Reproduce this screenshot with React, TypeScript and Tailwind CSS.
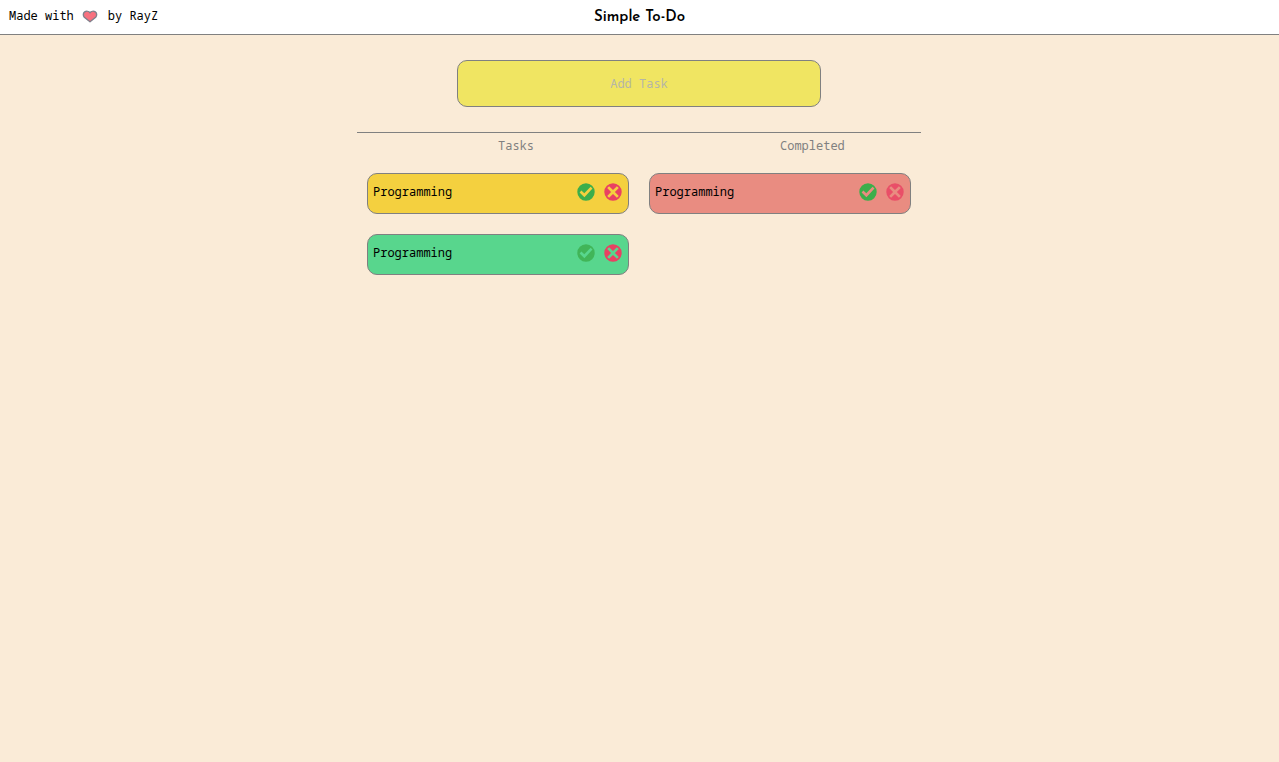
type Task = { id: number; name: string; color: string; canComplete: boolean; canRemove: boolean };

const tasks: Task[] = [
  { id: 1, name: 'Programming', color: 'bg-[#f4d03f]', canComplete: true, canRemove: true },
  { id: 2, name: 'Programming', color: 'bg-[#58d68d]', canComplete: false, canRemove: true },
];

const completed: Task[] = [
  { id: 3, name: 'Programming', color: 'bg-[#e98c81]', canComplete: true, canRemove: false },
];

function Heart() {
  return (
    <svg viewBox="0 0 16 14" className="h-3.5 w-4" aria-hidden="true">
      <path
        d="M8 12.800 2.300 8.200C.9 6.600 1 4 2.700 2.900 4.400 1.800 6.800 2.200 8 3.700 9.200 2.200 11.600 1.800 13.300 2.900c1.700 1.100 1.800 3.700.4 5.300Z"
        fill="#f8717f"
        stroke="#80808c"
        strokeWidth="1.4"
        strokeLinejoin="round"
      />
    </svg>
  );
}

function CheckIcon() {
  return (
    <svg viewBox="0 0 18 18" className="size-[18px]" aria-hidden="true">
      <path
        fillRule="evenodd"
        fill="#3cae4b"
        d="M9 .3a8.700 8.700 0 1 1 0 17.400A8.700 8.700 0 0 1 9 .3ZM13.600 3.700 7.300 10.300 4.400 7.600 2.600 9.500l4.800 4.700L15.500 5.600Z"
      />
    </svg>
  );
}

function CrossIcon() {
  return (
    <svg viewBox="0 0 18 18" className="size-[18px]" aria-hidden="true">
      <path
        fillRule="evenodd"
        fill="#e94162"
        d="M9 .3a8.700 8.700 0 1 1 0 17.400A8.700 8.700 0 0 1 9 .3ZM5.100 3.200 3.200 5.100 7.100 9l-3.900 3.900 1.900 1.900L9 10.900l3.900 3.900 1.900-1.900L10.900 9l3.900-3.900-1.900-1.900L9 7.100Z"
      />
    </svg>
  );
}

function TaskCard({ task }: { task: Task }) {
  return (
    <li className={`flex items-start justify-between rounded-[10px] border border-[#808080] pt-2 pr-1.5 pb-[11px] pl-[5px] ${task.color}`}>
      <span className="leading-5">{task.name}</span>
      <span className="flex gap-[9px] pt-px">
        <button type="button" aria-label="Complete task" disabled={!task.canComplete} className="disabled:opacity-80">
          <CheckIcon />
        </button>
        <button type="button" aria-label="Remove task" disabled={!task.canRemove} className="disabled:opacity-80">
          <CrossIcon />
        </button>
      </span>
    </li>
  );
}

function Column({ title, items }: { title: string; items: Task[] }) {
  return (
    <section className="flex-1">
      <h2 className="pt-[3px] pl-[50%] leading-5 text-[#808080]">{title}</h2>
      <ul className="flex flex-col gap-5 px-2.5 pt-[17px]">
        {items.map((task) => (
          <TaskCard key={task.id} task={task} />
        ))}
      </ul>
    </section>
  );
}

export default function App() {
  return (
    <div className="min-h-screen bg-[#faebd7] font-['Noto_Sans_Mono','Source_Code_Pro','DejaVu_Sans_Mono',monospace] text-[12px] text-black">
      <header className="grid grid-cols-3 items-end border-b border-[#808080] bg-white px-[9px] pt-1.5 pb-1.5">
        <p className="flex items-center gap-2 pb-0.5 leading-5">
          <span>Made with</span>
          <Heart />
          <span className="pl-0.5">by RayZ</span>
        </p>
        <h1 className="text-center font-['Josefin_Sans',Lato,sans-serif] text-[15px] leading-5 font-semibold">Simple To-Do</h1>
      </header>
      <main className="mx-auto max-w-[565px] pt-[25px] pr-px">
        <form className="px-[100px] pb-[25px]" onSubmit={(e) => e.preventDefault()}>
          <input
            type="text"
            aria-label="Add Task"
            placeholder="Add Task"
            className="block h-[47px] w-full rounded-[10px] border border-[#808080] bg-[#f0e562] text-center placeholder:text-[#b5b5a8]"
          />
        </form>
        <div className="flex border-t border-[#808080]">
          <Column title="Tasks" items={tasks} />
          <Column title="Completed" items={completed} />
        </div>
      </main>
    </div>
  );
}
